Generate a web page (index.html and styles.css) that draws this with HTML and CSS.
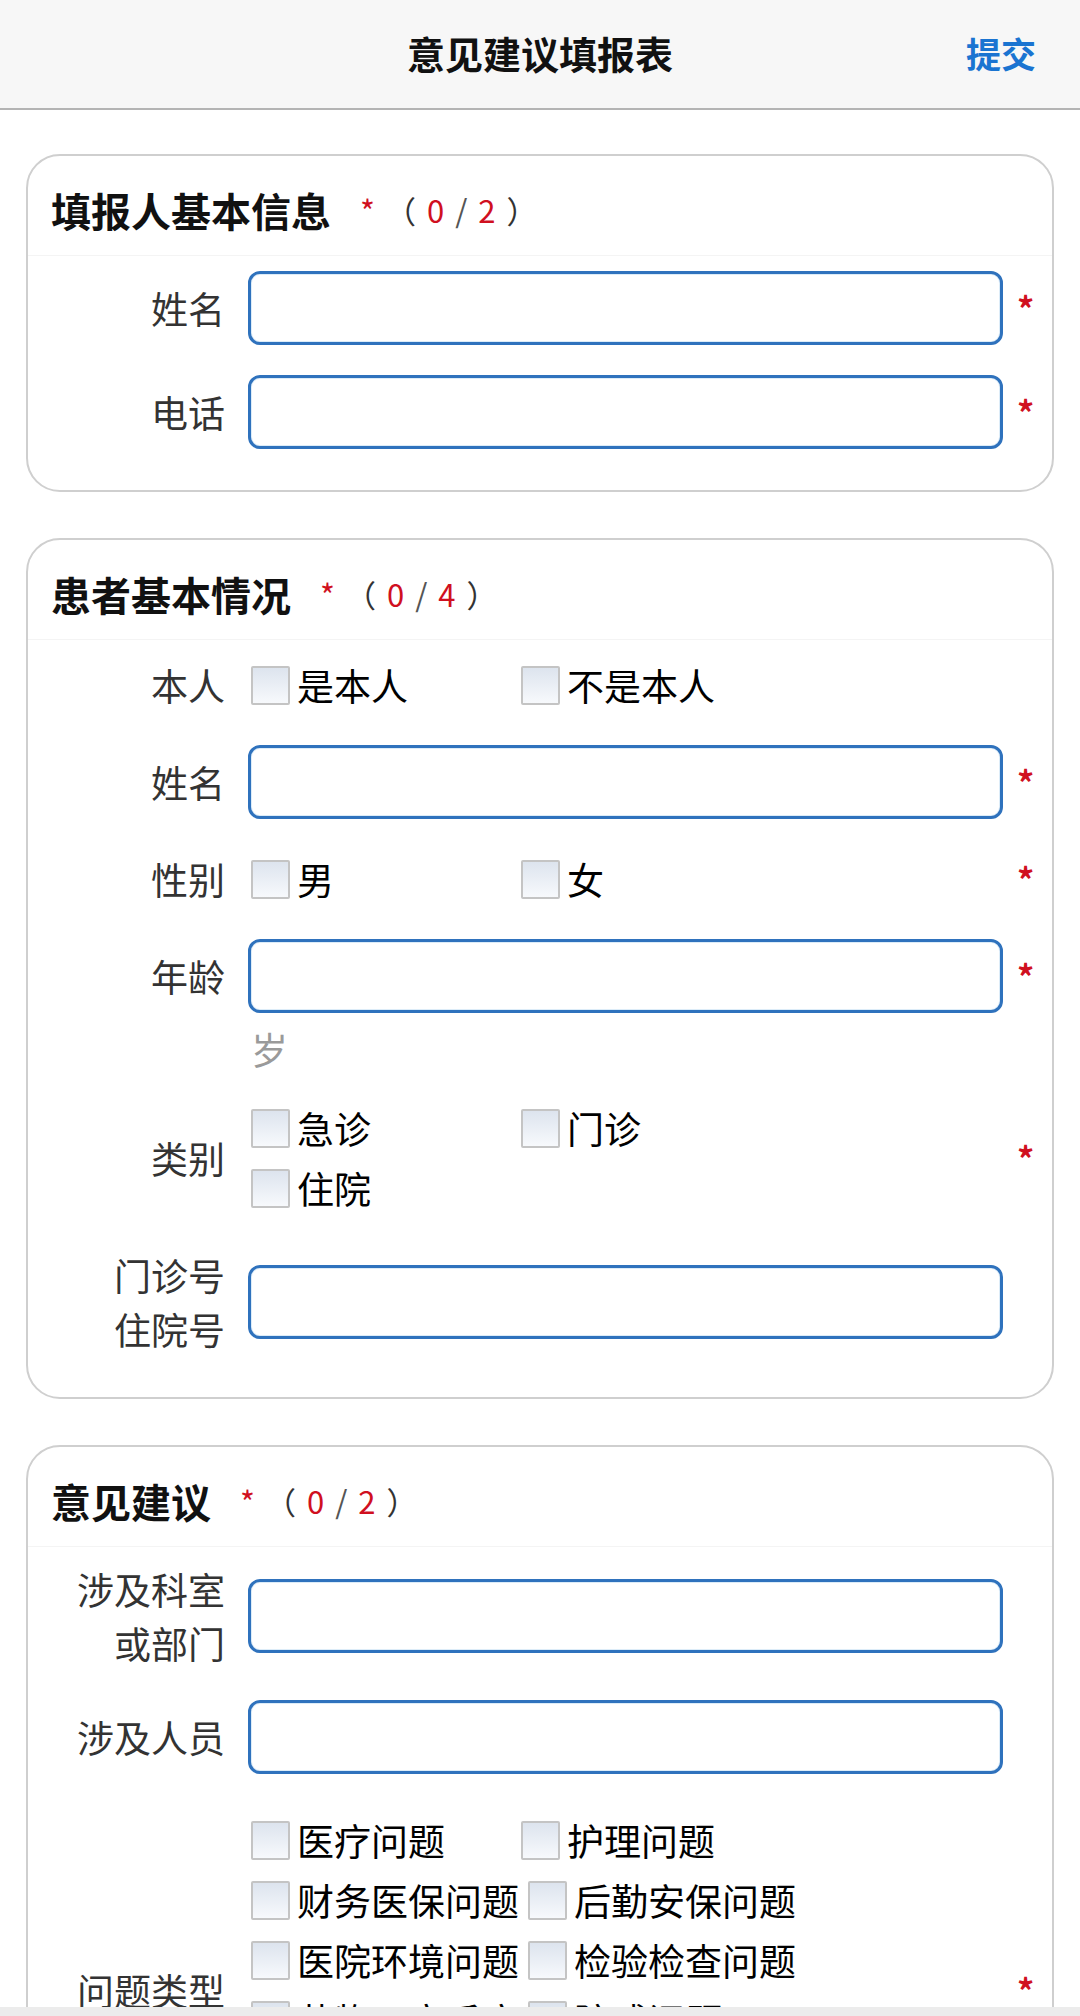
FILE: index.html
```html
<!DOCTYPE html>
<html lang="zh-CN">
<head>
<meta charset="UTF-8">
<title>意见建议填报表</title>
<link rel="stylesheet" href="styles.css">
</head>
<body>
<header class="topbar">
  <span></span>
  <h1 class="topbar-title">意见建议填报表</h1>
  <a class="topbar-submit" href="#">提交</a>
</header>

<main class="page">
  <section class="card">
    <div class="card-head">
      <span class="card-title">填报人基本信息</span>
      <span class="head-req">*</span>
      <span class="count"><span>（</span><b>0</b><span class="slash">/</span><b>2</b><span>）</span></span>
    </div>
    <div class="row">
      <label class="row-label">姓名</label>
      <div class="row-field"><input class="text-input" type="text"></div>
      <span class="row-star">*</span>
    </div>
    <div class="row">
      <label class="row-label">电话</label>
      <div class="row-field"><input class="text-input" type="tel"></div>
      <span class="row-star">*</span>
    </div>
  </section>

  <section class="card">
    <div class="card-head">
      <span class="card-title">患者基本情况</span>
      <span class="head-req">*</span>
      <span class="count"><span>（</span><b>0</b><span class="slash">/</span><b>4</b><span>）</span></span>
    </div>
    <div class="row">
      <label class="row-label">本人</label>
      <div class="row-field opts">
        <label class="opt"><span class="box"></span>是本人</label>
        <label class="opt"><span class="box"></span>不是本人</label>
      </div>
      <span class="row-star"></span>
    </div>
    <div class="row">
      <label class="row-label">姓名</label>
      <div class="row-field"><input class="text-input" type="text"></div>
      <span class="row-star">*</span>
    </div>
    <div class="row">
      <label class="row-label">性别</label>
      <div class="row-field opts">
        <label class="opt"><span class="box"></span>男</label>
        <label class="opt"><span class="box"></span>女</label>
      </div>
      <span class="row-star">*</span>
    </div>
    <div class="row row-top">
      <label class="row-label">年龄</label>
      <div class="row-field">
        <input class="text-input" type="text">
        <div class="unit">岁</div>
      </div>
      <span class="row-star">*</span>
    </div>
    <div class="row">
      <label class="row-label">类别</label>
      <div class="row-field opts">
        <label class="opt"><span class="box"></span>急诊</label>
        <label class="opt"><span class="box"></span>门诊</label>
        <label class="opt"><span class="box"></span>住院</label>
      </div>
      <span class="row-star">*</span>
    </div>
    <div class="row">
      <label class="row-label">门诊号<br>住院号</label>
      <div class="row-field"><input class="text-input" type="text"></div>
      <span class="row-star"></span>
    </div>
  </section>

  <section class="card">
    <div class="card-head">
      <span class="card-title">意见建议</span>
      <span class="head-req">*</span>
      <span class="count"><span>（</span><b>0</b><span class="slash">/</span><b>2</b><span>）</span></span>
    </div>
    <div class="row">
      <label class="row-label">涉及科室<br>或部门</label>
      <div class="row-field"><input class="text-input" type="text"></div>
      <span class="row-star"></span>
    </div>
    <div class="row">
      <label class="row-label">涉及人员</label>
      <div class="row-field"><input class="text-input" type="text"></div>
      <span class="row-star"></span>
    </div>
    <div class="row row-long">
      <label class="row-label">问题类型</label>
      <div class="row-field opts">
        <label class="opt"><span class="box"></span>医疗问题</label>
        <label class="opt"><span class="box"></span>护理问题</label>
        <label class="opt"><span class="box"></span>财务医保问题</label>
        <label class="opt"><span class="box"></span>后勤安保问题</label>
        <label class="opt"><span class="box"></span>医院环境问题</label>
        <label class="opt"><span class="box"></span>检验检查问题</label>
        <label class="opt"><span class="box"></span>药物不良反应</label>
        <label class="opt"><span class="box"></span>院感问题</label>
        <label class="opt"><span class="box"></span>服务态度问题</label>
        <label class="opt"><span class="box"></span>医德医风问题</label>
        <label class="opt"><span class="box"></span>其他问题</label>
      </div>
      <span class="row-star">*</span>
    </div>
  </section>
</main>

<div class="bottom-strip"></div>
</body>
</html>
```

FILE: styles.css
```css
:root{
  --blue:#2f72bd;
  --red:#d0101f;
  --line:#cfcfcf;
  --text:#111;
}
*{box-sizing:border-box;margin:0;padding:0;}
body{background:#fff;color:var(--text);font-family:"Noto Sans CJK SC","Noto Sans",sans-serif;}

.topbar{height:110px;background:#f7f7f7;border-bottom:2px solid #b4b4b4;display:grid;grid-template-columns:1fr auto 1fr;align-items:center;padding:0 44px 4px;}
.topbar-title{font-size:38px;font-weight:bold;color:#111;}
.topbar-submit{justify-self:end;font-size:35px;font-weight:bold;color:#1a74d1;text-decoration:none;}

.page{padding-top:44px;}
.card{margin:0 26px 46px;border:2px solid var(--line);border-radius:34px;padding-bottom:26px;background:#fff;}
.card-head{height:100px;padding:30px 0 0 23px;border-bottom:1px solid #f4f4f4;display:flex;align-items:flex-start;line-height:48px;}
.card-title{font-size:40px;font-weight:bold;color:#111;}
.head-req{font-size:32px;color:var(--red);margin-left:29px;}
.count{display:flex;gap:11px;font-size:31px;color:#333;margin-left:10px;}
.count b{font-weight:normal;color:var(--red);}
.count .slash{color:#555;}

.row{display:grid;grid-template-columns:220px 1fr 49px;align-items:center;padding:15px 0;}
.row-label{padding-right:23px;text-align:right;font-size:37px;line-height:54px;color:#333;}
.row-field{min-width:0;}
.row-star{text-align:center;padding-right:4px;font-size:34px;font-weight:bold;color:var(--red);line-height:40px;}
.row-top{align-items:start;padding-bottom:7px;}
.row-top .row-label{line-height:74px;}
.row-top .row-star{line-height:74px;}
.row-long{padding-top:21px;}

.text-input{display:block;width:100%;height:74px;border:3px solid var(--blue);border-radius:12px;background:#fff;box-shadow:inset 0 0 0 1px #dcecf8;outline:none;font-size:34px;padding:0 14px;}
.unit{margin:9px 0 0 3px;font-size:37px;line-height:54px;color:#9a9a9a;}

.opts{display:flex;flex-wrap:wrap;column-gap:9px;padding-left:3px;}
.opt{display:flex;align-items:center;gap:7px;min-width:261px;height:60px;font-size:37px;color:#000;}
.box{flex:none;width:39px;height:39px;border:2px solid #c4c4c4;border-radius:2px;background:linear-gradient(to bottom,#dde4ee,#f7f9fc);}

.bottom-strip{position:fixed;left:0;right:0;bottom:0;height:9px;background:#ececec;}
```
